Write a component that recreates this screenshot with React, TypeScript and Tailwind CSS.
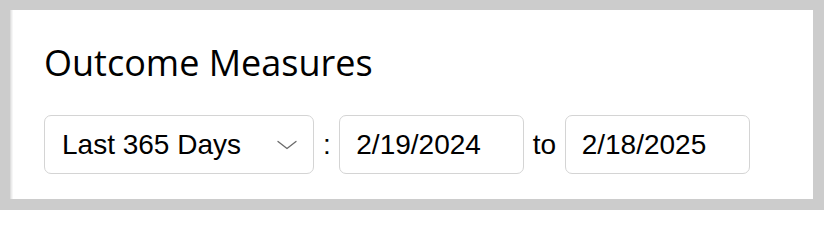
import React from "react";

const Chevron = () => (
  <svg width="20" height="10" viewBox="0 0 20 10" fill="none" stroke="#6b6b6b" strokeWidth="1.3" strokeLinecap="round" strokeLinejoin="round">
    <path d="M1 1.5l9 7 9-7" />
  </svg>
);

const DateBox = ({ value }: { value: string }) => (
  <div className="flex h-[59px] w-[185px] items-center rounded-[7px] border border-[#d4d4d4] bg-white pl-[16px] text-[28px] text-black">
    {value}
  </div>
);

const App = () => {
  return (
    <div className="h-[210px] w-[824px] bg-[#cccccc] pl-[10px] pr-[11px] pt-[10px] pb-[11px]">
      <div className="flex h-[189px] flex-col bg-white pl-[34px] pt-[28px] shadow-[inset_1px_0_0_#dedede,inset_2px_0_0_#ececec,inset_3px_0_0_#f6f6f6]">
        <h1 className="text-[36px] leading-[50px] text-black [font-family:'Open_Sans','Noto_Sans',sans-serif]">
          Outcome Measures
        </h1>
        <div className="mt-[27px] flex items-center text-[28px] text-black [font-family:'Liberation_Sans',Arial,sans-serif]">
          <div className="flex h-[59px] w-[270px] items-center justify-between rounded-[7px] border border-[#d4d4d4] bg-white pl-[17px] pr-[16px]">
            <span>Last 365 Days</span>
            <Chevron />
          </div>
          <span className="ml-[9px] mr-[8.5px]">:</span>
          <DateBox value="2/19/2024" />
          <span className="mx-[8.5px]">to</span>
          <DateBox value="2/18/2025" />
        </div>
      </div>
    </div>
  );
};

export default App;
